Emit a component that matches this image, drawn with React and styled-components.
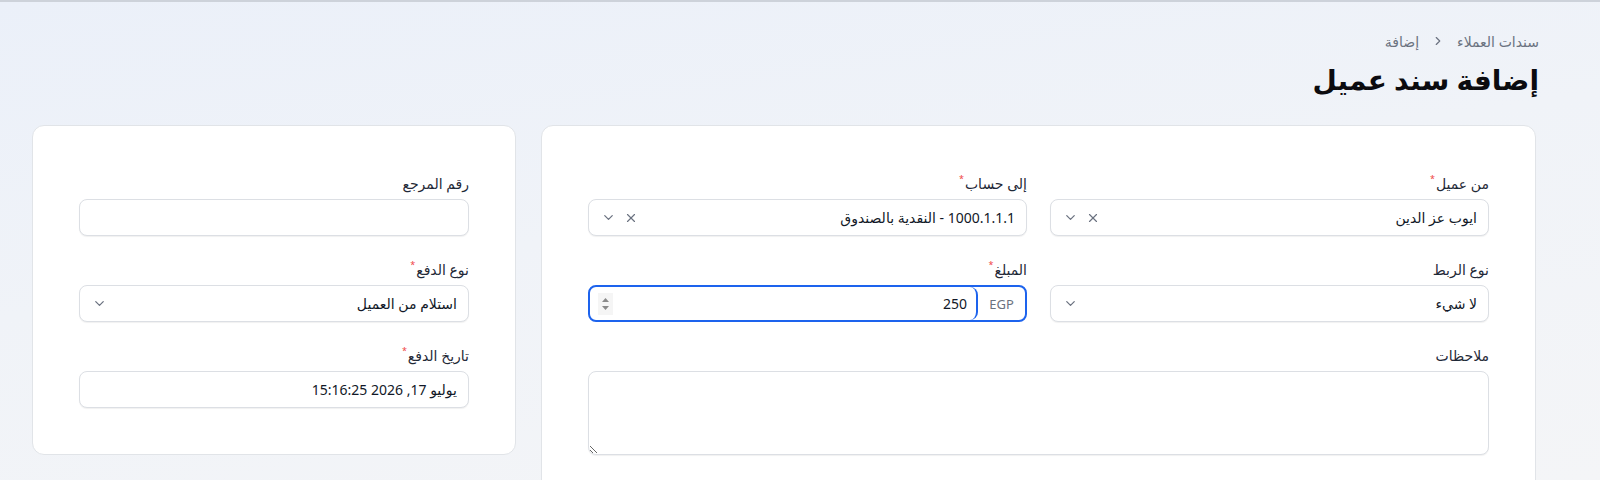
import React from 'react'
import styled, { createGlobalStyle } from 'styled-components'
import { ChevronDown, X } from 'lucide-react'

const GlobalStyle = createGlobalStyle`
    * { box-sizing: border-box; }
    html, body, #root {
        margin: 0;
        padding: 0;
        width: 100%;
        height: 480px;
        overflow: hidden;
    }
    body {
        font-family: "Noto Sans", "DejaVu Sans", sans-serif;
        color: #111827;
        background: #f3f5f8;
    }
`;

const Page = styled.div`
    direction: rtl;
    width: 100%;
    height: 480px;
    overflow: hidden;
    padding: 27px 64px 0 32px;
    border-top: 2px solid #cdd2da;
    background: linear-gradient(172deg, #ebf0f9 0%, #f0f3f8 45%, #f4f5f7 100%);
`;

const Breadcrumb = styled.nav`
    display: flex;
    align-items: center;
    gap: 12px;
    font-size: 14px;
    color: #6b7280;
    height: 24px;
    margin-right: -3px;
`;

const Crumb = styled.span`
    color: ${p => p.$current ? '#6b7280' : '#6b7280'};
`;

const Title = styled.h1`
    margin: 6px -3px 0 0;
    font-size: 28px;
    line-height: 40px;
    font-weight: 700;
    color: #0b0b0f;
`;

const Columns = styled.div`
    display: grid;
    grid-template-columns: minmax(0, 1fr) 484px;
    gap: 25px;
    margin-top: 26px;
    align-items: start;
`;

const Card = styled.section`
    background: #fff;
    border: 1px solid #e1e4e8;
    border-radius: 12px;
    padding: 49px 46px 46px;
    min-height: ${p => p.$tall ? '400px' : 'auto'};
`;

const FieldGrid = styled.div`
    display: grid;
    grid-template-columns: ${p => p.$cols === 2 ? 'minmax(0, 1fr) minmax(0, 1fr)' : 'minmax(0, 1fr)'};
    column-gap: 23px;
    row-gap: 25px;
`;

const Field = styled.div`
    display: flex;
    flex-direction: column;
    gap: 6px;
    grid-column: ${p => p.$full ? '1 / -1' : 'auto'};
`;

const Label = styled.label`
    font-size: 14px;
    line-height: 18px;
    color: #1f2937;
    display: flex;
    align-items: flex-start;
`;

const Required = styled.span`
    color: #ef4444;
    font-size: 9px;
    line-height: 8px;
    margin-right: 1px;
`;

const Box = styled.div`
    height: 37px;
    display: flex;
    align-items: center;
    background: #fff;
    border: 1px solid #dcdfe4;
    border-radius: 8px;
    box-shadow: 0 1px 1px rgba(0, 0, 0, 0.06);
    padding: 0 11px 0 12px;
    font-size: 14px;
    color: #111827;
`;

const Value = styled.span`
    flex: 1;
    white-space: nowrap;
`;

const Icons = styled.span`
    display: flex;
    align-items: center;
    gap: 8px;
    color: #6b7280;
    direction: ltr;
`;

const AmountGroup = styled.div`
    height: 37px;
    display: flex;
    align-items: stretch;
    border: 2px solid #1d63ed;
    border-radius: 8px;
    overflow: hidden;
    background: #fff;
`;

const Addon = styled.span`
    width: 47px;
    display: flex;
    align-items: center;
    justify-content: center;
    color: #6b7280;
    font-size: 13px;
    font-family: "Noto Sans", sans-serif;
`;

const AmountInput = styled.div`
    flex: 1;
    display: flex;
    align-items: center;
    border-right: 2px solid #1d63ed;
    border-radius: 0 8px 8px 0;
    padding: 0 9px 0 8px;
    font-size: 14px;
    color: #111827;
`;

const Spinner = styled.span`
    width: 15px;
    height: 22px;
    background: #f5f5f5;
    display: flex;
    align-items: center;
    justify-content: center;
`;

const Notes = styled.textarea`
    height: 84px;
    resize: vertical;
    border: 1px solid #dcdfe4;
    border-radius: 8px;
    box-shadow: 0 1px 1px rgba(0, 0, 0, 0.06);
    font-family: inherit;
    font-size: 14px;
    padding: 8px 11px;
    outline: none;
`;

function SelectBox({ value, clearable }) {
    return (
        <Box>
            <Value>{value}</Value>
            <Icons>
                <ChevronDown size={15} strokeWidth={2} />
                {clearable && <X size={14} strokeWidth={2} />}
            </Icons>
        </Box>
    )
}

function FieldLabel({ children, required }) {
    return (
        <Label>
            {children}
            {required && <Required>*</Required>}
        </Label>
    )
}

export default function App() {
    return (
        <>
            <GlobalStyle />
            <Page>
                <Breadcrumb>
                    <Crumb>سندات العملاء</Crumb>
                    <svg width="14" height="14" viewBox="0 0 24 24" fill="none" stroke="#6b7280" strokeWidth="2" strokeLinecap="round" strokeLinejoin="round">
                        <path d="M9 6 L15 12 L9 18" />
                    </svg>
                    <Crumb $current>إضافة</Crumb>
                </Breadcrumb>
                <Title>إضافة سند عميل</Title>

                <Columns>
                    <Card $tall>
                        <FieldGrid $cols={2}>
                            <Field>
                                <FieldLabel required>من عميل</FieldLabel>
                                <SelectBox value="ايوب عز الدين" clearable />
                            </Field>
                            <Field>
                                <FieldLabel required>إلى حساب</FieldLabel>
                                <SelectBox value="1000.1.1.1 - النقدية بالصندوق" clearable />
                            </Field>
                            <Field>
                                <FieldLabel>نوع الربط</FieldLabel>
                                <SelectBox value="لا شيء" />
                            </Field>
                            <Field>
                                <FieldLabel required>المبلغ</FieldLabel>
                                <AmountGroup>
                                    <Addon>EGP</Addon>
                                    <AmountInput>
                                        <Value>250</Value>
                                        <Spinner>
                                            <svg width="9" height="16" viewBox="0 0 9 16">
                                                <path d="M4.5 2 L8 6 L1 6 Z" fill="#8a8a8a" />
                                                <path d="M4.5 14 L8 10 L1 10 Z" fill="#8a8a8a" />
                                            </svg>
                                        </Spinner>
                                    </AmountInput>
                                </AmountGroup>
                            </Field>
                            <Field $full>
                                <FieldLabel>ملاحظات</FieldLabel>
                                <Notes />
                            </Field>
                        </FieldGrid>
                    </Card>

                    <Card>
                        <FieldGrid>
                            <Field>
                                <FieldLabel>رقم المرجع</FieldLabel>
                                <Box />
                            </Field>
                            <Field>
                                <FieldLabel required>نوع الدفع</FieldLabel>
                                <SelectBox value="استلام من العميل" />
                            </Field>
                            <Field>
                                <FieldLabel required>تاريخ الدفع</FieldLabel>
                                <Box>
                                    <Value>يوليو 17, 2026 15:16:25</Value>
                                </Box>
                            </Field>
                        </FieldGrid>
                    </Card>
                </Columns>
            </Page>
        </>
    )
}
